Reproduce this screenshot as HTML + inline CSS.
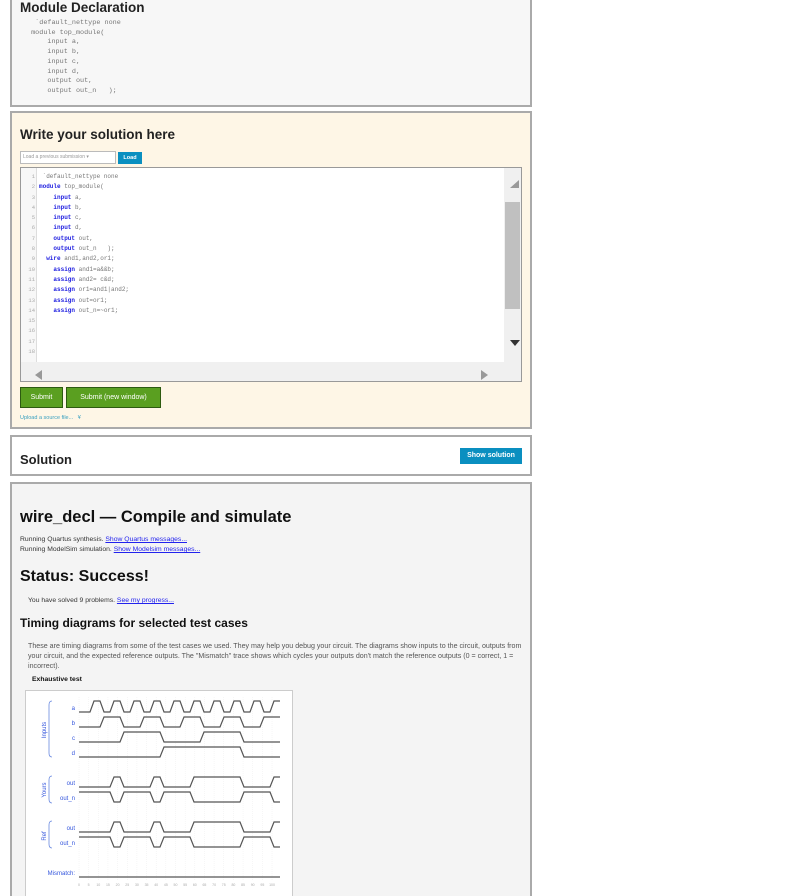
<!DOCTYPE html>
<html style="overflow:hidden;height:896px"><head><meta charset="utf-8"><style>
body{margin:0;width:810px;height:896px;overflow:hidden;background:#fff;font-family:"Liberation Sans",sans-serif;position:relative}
.p{position:absolute;left:10px;width:518px;border:2px solid #aaa}
h2{margin:0;font-size:13.5px;font-weight:bold;color:#222;position:absolute;left:8px}
.mono{font-family:"Liberation Mono",monospace;font-size:6.6px;color:#777;line-height:8.6px;white-space:pre;position:absolute}
.kw{color:#2020e0;font-weight:bold}
.btn{position:absolute;color:#fff;font-size:7px;text-align:center}
.small{font-size:6.8px;color:#333;position:absolute;white-space:nowrap}
a{color:#2222ee;text-decoration:underline}
</style></head><body>

<div class="p" style="top:-10px;height:113px;background:#f7f7f7">
<h2 style="top:8px">Module Declaration</h2>
<div class="mono" style="left:15px;top:27px;line-height:9.7px;font-size:6.8px">  `default_nettype none
 module top_module(
     input a,
     input b,
     input c,
     input d,
     output out,
     output out_n   );</div>
</div>

<div class="p" style="top:111px;height:314px;background:#fef6e6">
<h2 style="top:14px">Write your solution here</h2>
<div style="position:absolute;left:8px;top:38px;width:92px;height:11px;border:1px solid #bbb;background:#fff;font-size:5px;color:#999;line-height:11px;padding-left:2px">Load a previous submission ▾</div>
<div class="btn" style="left:106px;top:39px;width:24px;height:12px;background:#0a8fc0;line-height:12px;font-size:5.5px;font-weight:bold">Load</div>
<div style="position:absolute;left:8px;top:54px;width:500px;height:213px;border:1px solid #999;background:#fff;overflow:hidden">
 <div style="position:absolute;left:0;top:0;width:15px;height:195px;background:#f7f7f7;border-right:1px solid #ddd"></div>
 <div class="mono" style="left:0;top:4px;width:14px;text-align:right;color:#aaa;font-size:5.5px;line-height:10.3px">1
2
3
4
5
6
7
8
9
10
11
12
13
14
15
16
17
18</div>
 <div class="mono" style="left:18px;top:4px;line-height:10.3px;font-size:6px"> `default_nettype none
<span class="kw">module</span> top_module(
    <span class="kw">input</span> a,
    <span class="kw">input</span> b,
    <span class="kw">input</span> c,
    <span class="kw">input</span> d,
    <span class="kw">output</span> out,
    <span class="kw">output</span> out_n   );
  <span class="kw">wire</span> and1,and2,or1;
    <span class="kw">assign</span> and1=a&amp;&amp;b;
    <span class="kw">assign</span> and2= c&amp;d;
    <span class="kw">assign</span> or1=and1|and2;
    <span class="kw">assign</span> out=or1;
    <span class="kw">assign</span> out_n=~or1;</div>
 <div style="position:absolute;right:0;top:0;width:17px;height:213px;background:#f0f0f0"></div>
 <div style="position:absolute;right:1px;top:34px;width:15px;height:107px;background:#c0c0c0"></div>
 <div style="position:absolute;right:2px;top:12px;width:0;height:0;border-left:9px solid transparent;border-bottom:8px solid #999"></div>
 <div style="position:absolute;right:1px;top:172px;width:0;height:0;border-left:5px solid transparent;border-right:5px solid transparent;border-top:6px solid #333"></div>
 <div style="position:absolute;left:0;top:194px;width:483px;height:19px;background:#f0f0f0"></div>
 <div style="position:absolute;left:14px;top:202px;width:0;height:0;border-top:5px solid transparent;border-bottom:5px solid transparent;border-right:7px solid #999"></div>
 <div style="position:absolute;left:460px;top:202px;width:0;height:0;border-top:5px solid transparent;border-bottom:5px solid transparent;border-left:7px solid #999"></div>
</div>
<div class="btn" style="left:8px;top:274px;width:41px;height:19px;background:#5a9f20;border:1px solid #2d5a10;line-height:19px">Submit</div>
<div class="btn" style="left:54px;top:274px;width:93px;height:19px;background:#5a9f20;border:1px solid #2d5a10;line-height:19px">Submit (new window)</div>
<div style="position:absolute;left:8px;top:302px;font-size:5.5px;color:#3aa0c0">Upload a source file... &nbsp;&nbsp;¥</div>
</div>

<div class="p" style="top:435px;height:37px;background:#fff">
<h2 style="top:15px;font-size:13px">Solution</h2>
<div class="btn" style="left:448px;top:11px;width:62px;height:16px;background:#0a8fc0;line-height:16px;font-size:7px;font-weight:bold">Show solution</div>
</div>

<div class="p" style="top:482px;height:420px;background:#f4f4f4">
<div style="position:absolute;left:8px;top:24px;font-size:16.5px;font-weight:bold;color:#111">wire_decl — Compile and simulate</div>
<div class="small" style="left:8px;top:51px;line-height:10px">Running Quartus synthesis. <a>Show Quartus messages...</a><br>Running ModelSim simulation. <a>Show Modelsim messages...</a></div>
<div style="position:absolute;left:8px;top:84px;font-size:16px;font-weight:bold;color:#111">Status: Success!</div>
<div class="small" style="left:16px;top:113px">You have solved 9 problems. <a>See my progress...</a></div>
<div style="position:absolute;left:8px;top:132px;font-size:12px;font-weight:bold;color:#111">Timing diagrams for selected test cases</div>
<div class="small" style="left:16px;top:157px;width:495px;white-space:normal;line-height:10px;color:#555;font-size:7.1px">These are timing diagrams from some of the test cases we used. They may help you debug your circuit. The diagrams show inputs to the circuit, outputs from your circuit, and the expected reference outputs. The "Mismatch" trace shows which cycles your outputs don't match the reference outputs (0 = correct, 1 = incorrect).</div>
<div class="small" style="left:20px;top:192px;font-weight:bold;color:#111">Exhaustive test</div>
</div>

<svg style="position:absolute;left:0;top:0" width="810" height="896">
<rect x="25.5" y="690.5" width="267" height="220" fill="#fff" stroke="#ccc"/>
<g font-size="6" fill="#3355dd" font-family="Liberation Sans" text-anchor="end">
<text x="75" y="710">a</text><text x="75" y="725">b</text><text x="75" y="740">c</text><text x="75" y="755">d</text>
<text x="75" y="785">out</text><text x="75" y="800">out_n</text>
<text x="75" y="830">out</text><text x="75" y="845">out_n</text>
<text x="75" y="875">Mismatch:</text>
<text transform="translate(46,730) rotate(-90)" text-anchor="middle">Inputs</text>
<text transform="translate(46,790) rotate(-90)" text-anchor="middle">Yours</text>
<text transform="translate(46,836) rotate(-90)" text-anchor="middle">Ref</text>
</g>
<g fill="none" stroke="#6a8ae0" stroke-width="0.8">
<path d="M52 701 Q49 701 49 705 V753 Q49 757 52 757"/>
<path d="M52 776 Q49 776 49 780 V799 Q49 803 52 803"/>
<path d="M52 821 Q49 821 49 825 V844 Q49 848 52 848"/>
</g>
<g id="gr" stroke="#eee" stroke-width="0.5" stroke-dasharray="1,1"></g>
<g id="tr" fill="none" stroke="#555" stroke-width="1.2"></g>
<g font-size="3.5" fill="#aaa" text-anchor="middle" id="tk"></g>
</svg>
<script>
(function(){
var tr=document.getElementById('tr'),tk=document.getElementById('tk'),gr=document.getElementById('gr'),ns='http://www.w3.org/2000/svg';
function f(n,s){
 if(s<4)return (n>>s)&1;
 var a=n&1,b=(n>>1)&1,c=(n>>2)&1,d=(n>>3)&1,o=(a&b)|(c&d);
 return s==4?o:1-o;}
var rows=[[701,712,0],[717,727,1],[732,742,2],[747,757,3],[777,787,4],[792,802,5],[822,832,4],[837,847,5]];
for(var i=0;i<=100;i+=5){var xx=79+i*1.93;var l=document.createElementNS(ns,'line');l.setAttribute('x1',xx);l.setAttribute('x2',xx);l.setAttribute('y1',697);l.setAttribute('y2',880);gr.appendChild(l);}
rows.forEach(function(r){
 var hi=r[0],lo=r[1],s=r[2];
 function y(n){return f(n%16,s)?hi:lo;}
 var d='M79 '+y(0),prev=y(0);
 for(var k=0;k<19;k++){var x=90+10*k,n=k+1,ny=y(n);
  if(ny!=prev){d+=' L'+x+' '+prev+' L'+(x+4)+' '+ny;prev=ny;}}
 d+=' L280 '+prev;
 var p=document.createElementNS(ns,'path');p.setAttribute('d',d);tr.appendChild(p);});
var p=document.createElementNS(ns,'path');p.setAttribute('d','M79 877 L280 877');tr.appendChild(p);
for(var i=0;i<=100;i+=5){var t=document.createElementNS(ns,'text');t.setAttribute('x',79+i*1.93);t.setAttribute('y',886);t.textContent=i;tk.appendChild(t);}
})();
</script>
</body></html>
